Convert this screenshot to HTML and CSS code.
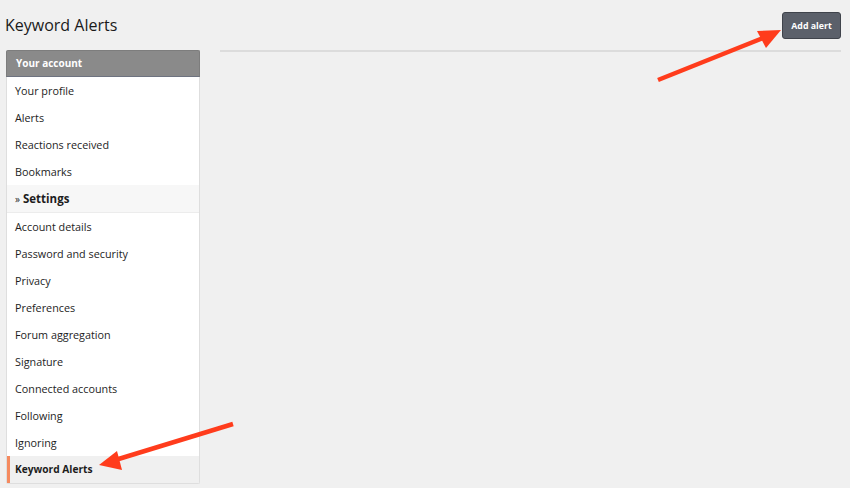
FILE: index.html
```html
<!DOCTYPE html>
<html lang="en">
<head>
<meta charset="utf-8">
<title>Keyword Alerts</title>
<link rel="stylesheet" href="styles.css">
</head>
<body>
<div class="page">
  <div class="top">
    <h1 class="title">Keyword Alerts</h1>
    <button class="btn">Add alert</button>
  </div>
  <div class="body">
    <nav class="side">
      <div class="side-head">Your account</div>
      <a class="item">Your profile</a>
      <a class="item">Alerts</a>
      <a class="item">Reactions received</a>
      <a class="item">Bookmarks</a>
      <div class="group"><span class="raquo">&raquo;</span> <b>Settings</b></div>
      <a class="item">Account details</a>
      <a class="item">Password and security</a>
      <a class="item">Privacy</a>
      <a class="item">Preferences</a>
      <a class="item">Forum aggregation</a>
      <a class="item">Signature</a>
      <a class="item">Connected accounts</a>
      <a class="item">Following</a>
      <a class="item">Ignoring</a>
      <a class="item active">Keyword Alerts</a>
    </nav>
    <main class="main"></main>
  </div>
</div>
<svg class="annot" width="850" height="488" viewBox="0 0 850 488">
  <line x1="658" y1="80" x2="768" y2="36" stroke="#ff3c1c" stroke-width="4.5" stroke-linecap="butt"/>
  <polygon points="781,30 757,31 766,48" fill="#ff3c1c"/>
  <line x1="233" y1="424" x2="112" y2="461" stroke="#ff3c1c" stroke-width="4.5" stroke-linecap="butt"/>
  <polygon points="99,465 117,451 122,470" fill="#ff3c1c"/>
</svg>
</body>
</html>
```
FILE: styles.css
```css
* { box-sizing: border-box; }
html, body { margin: 0; padding: 0; }
body {
  background: #f0f0f0;
  font-family: "Open Sans", "Liberation Sans", sans-serif;
  color: #1d1d1d;
  width: 850px;
  height: 488px;
  overflow: hidden;
}
.page { padding: 0 9px 0 6px; }
.top {
  display: flex;
  justify-content: space-between;
  align-items: flex-start;
  padding-top: 12px;
  height: 50px;
}
.title {
  margin: 0 0 0 -1px;
  font-size: 16px;
  font-weight: 400;
  line-height: 27px;
  color: #1a1a1a;
}
.btn {
  width: 59px;
  height: 27px;
  padding: 0;
  background: #5b606a;
  border: 1px solid #3f434b;
  border-radius: 3px;
  color: #fff;
  font-family: inherit;
  font-size: 8.8px;
  font-weight: 700;
}
.body {
  display: flex;
  gap: 20px;
  align-items: flex-start;
}
.side {
  width: 194px;
  flex: none;
  background: #fff;
  border: 1px solid #dedede;
  border-top: none;
  border-radius: 2px;
  display: flex;
  flex-direction: column;
}
.side-head {
  height: 27px;
  background: #8a8a8a;
  border: 1px solid #7d7d7d;
  border-bottom-color: #6e7380;
  margin: 0 -1px;
  color: #fff;
  font-size: 10px;
  font-weight: 700;
  line-height: 25px;
  padding-left: 9px;
  border-radius: 2px 2px 0 0;
}
.item {
  display: block;
  height: 27px;
  line-height: 27px;
  padding-left: 8px;
  font-size: 10.8px;
  color: #1d1d1d;
}
.group {
  height: 28px;
  line-height: 28px;
  padding-left: 8px;
  background: #f7f7f7;
  border-bottom: 1px solid #ececec;
  font-size: 11.5px;
}
.raquo { font-size: 10px; font-weight: 400; }
.group b { font-weight: 700; }
.item.active {
  background: #f0f0f0;
  font-weight: 700;
  font-size: 10.2px;
  border-left: 3px solid #f58a5f;
  padding-left: 5px;
}
.main {
  flex: 1;
  border-top: 2px solid #dcdcdc;
}
.annot {
  position: absolute;
  left: 0;
  top: 0;
  pointer-events: none;
}
```
